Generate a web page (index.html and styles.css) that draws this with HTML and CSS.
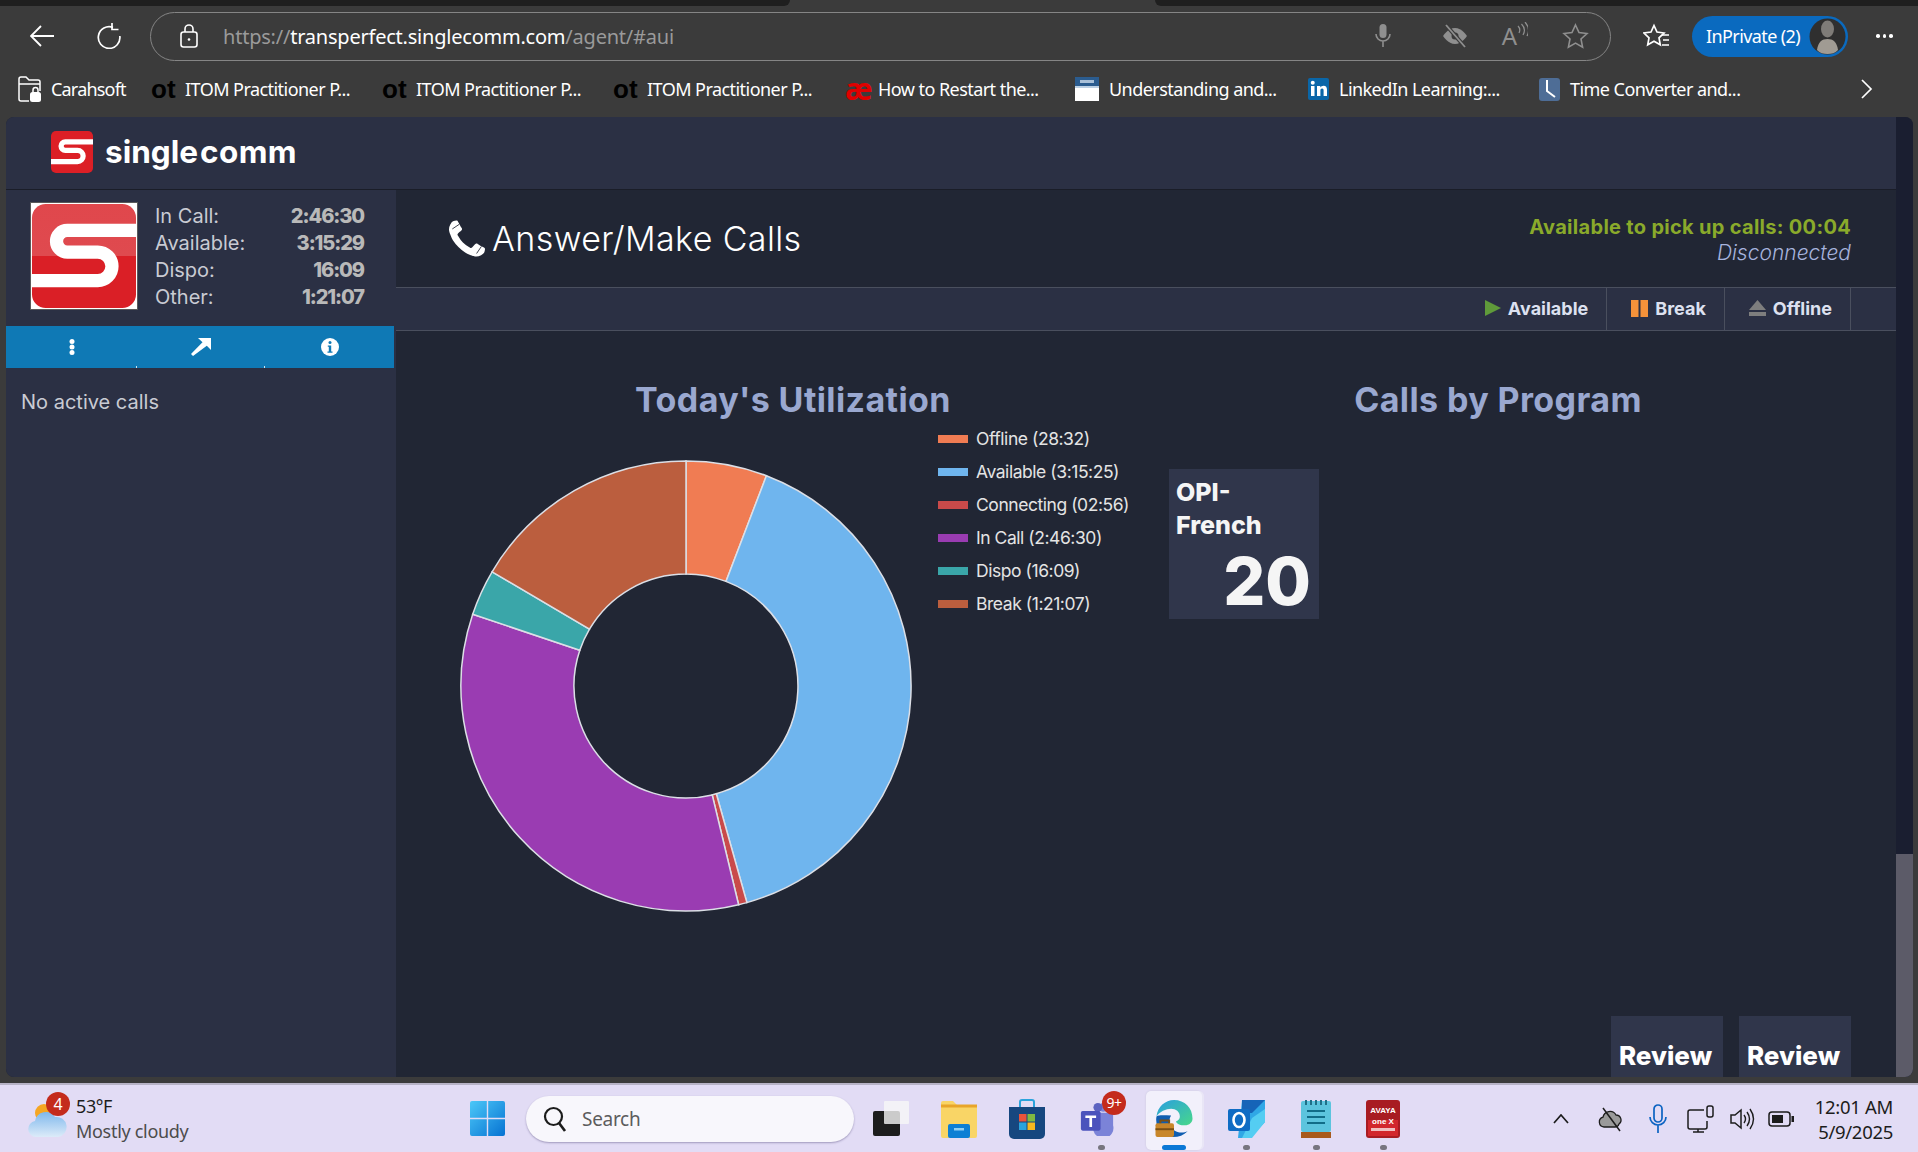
FILE: index.html
```html
<!DOCTYPE html>
<html lang="en">
<head>
    <meta charset="UTF-8">
    <title>SingleComm Agent</title>
    <link rel="stylesheet" href="styles.css">
</head>
<body>
    <div class="tabstrip"><div class="tab-dark tab-left"></div><div class="tab-dark tab-right"></div></div>

    <div class="toolbar">
        <svg class="tool-back" width="24" height="22" viewBox="0 0 24 22"><path d="M11 1 1 11l10 10M1 11h23" fill="none" stroke="#fff" stroke-width="1.8"/></svg>
        <svg class="tool-reload" width="24" height="26" viewBox="0 0 24 26"><path d="M16 4.500A10.800 10.800 0 1 0 22.800 13" fill="none" stroke="#fff" stroke-width="1.7"/><path d="M15 0v6.500h6.500" fill="none" stroke="#fff" stroke-width="1.7"/></svg>
        <div class="address">
            <svg class="lock" width="18" height="24" viewBox="0 0 18 24"><rect x="1" y="8" width="16" height="15" rx="2.500" fill="none" stroke="#fff" stroke-width="1.600"/><path d="M5 8V5a4 4 0 0 1 8 0v3" fill="none" stroke="#fff" stroke-width="1.600"/><circle cx="9" cy="15.500" r="1.300" fill="#fff"/></svg>
            <span class="url"><span class="url-dim">https://</span>transperfect.singlecomm.com<span class="url-dim">/agent/#aui</span></span>
            <div class="address-icons">
                <svg class="icon-mic" width="16" height="26" viewBox="0 0 16 26"><rect x="4.500" y="1" width="7" height="14" rx="3.500" fill="#8f8f8f"/><path d="M1 11a7 7 0 0 0 14 0M8 18v6" fill="none" stroke="#8f8f8f" stroke-width="1.600"/></svg>
                <svg width="26" height="24" viewBox="0 0 26 24"><path d="M1 12s5-8 12-8 12 8 12 8-5 8-12 8-12-8-12-8z" fill="#8f8f8f"/><circle cx="13" cy="12" r="3.500" fill="#3b3b3b"/><path d="M4 1l19 22" stroke="#3b3b3b" stroke-width="4"/><path d="M4 1l19 22" stroke="#8f8f8f" stroke-width="1.800"/></svg>
                <span class="read-aloud">A<svg width="11" height="16" viewBox="0 0 11 16"><path d="M1 4q3 3 1 7M4.500 2q5 5 1.500 11M8 0q6 7 2 14" fill="none" stroke="#8f8f8f" stroke-width="1.200"/></svg></span>
                <svg width="27" height="27" viewBox="0 0 27 27"><path d="M13.500 2l3.500 7.500 8 1-6 5.500 1.600 8.200-7.100-4.100-7.100 4.100L8 16 2 10.500l8-1z" fill="none" stroke="#8f8f8f" stroke-width="1.600"/></svg>
            </div>
        </div>
        <svg class="tool-fav" width="27" height="27" viewBox="0 0 27 27"><path d="M11 2.500l3 6.500 7 1-5 4.800 1.300 7-6.300-3.500-6.300 3.500 1.300-7-5-4.800 7-1z" fill="#3b3b3b" stroke="#fff" stroke-width="1.700"/><path d="M19 12h7M20 17h6M19 22h7" stroke="#fff" stroke-width="1.700"/></svg>
        <div class="profile">
            <span>InPrivate (2)</span>
            <svg class="avatar" width="37" height="37" viewBox="0 0 37 37"><circle cx="18.500" cy="18.500" r="18" fill="#2f2f2f"/><ellipse cx="18.500" cy="11" rx="6.500" ry="8.500" fill="#7f7c78"/><path d="M8 32c1-8 5-11 10.500-11S28 24 29 32c-3 3-6 4-10.500 4S11 35 8 32z" fill="#a09b93"/></svg>
        </div>
        <div class="tool-more"><i></i><i></i><i></i></div>
    </div>

    <div class="bookmarks">
        <div class="bm bm-folder">
            <svg width="24" height="28" viewBox="0 0 24 28"><path d="M1 24V4a2 2 0 0 1 2-2h5l3 3h9a2 2 0 0 1 2 2v9M1 9h21M1 24a2 2 0 0 0 2 2h8" fill="none" stroke="#fff" stroke-width="1.500"/><rect x="12" y="17" width="11" height="10" rx="2.500" fill="#fff"/><path d="M15 17v-2a2.500 2.500 0 0 1 5 0v2" fill="none" stroke="#fff" stroke-width="1.500"/></svg>
            <span>Carahsoft</span>
        </div>
        <div class="bm"><b class="bm-ot">ot</b><span>ITOM Practitioner P...</span></div>
        <div class="bm"><b class="bm-ot">ot</b><span>ITOM Practitioner P...</span></div>
        <div class="bm"><b class="bm-ot">ot</b><span>ITOM Practitioner P...</span></div>
        <div class="bm"><b class="bm-ae">æ</b><span>How to Restart the...</span></div>
        <div class="bm">
            <svg width="24" height="24" viewBox="0 0 24 24"><rect width="24" height="24" fill="#fff"/><rect width="24" height="11" fill="#2b5c8f"/><rect x="5" y="3" width="14" height="3" fill="#a9c0d8"/><rect y="9" width="24" height="2" fill="#bcd0e4"/></svg>
            <span>Understanding and...</span>
        </div>
        <div class="bm">
            <svg width="21" height="22" viewBox="0 0 21 22"><rect width="21" height="22" rx="2" fill="#0a66a8"/><rect x="3" y="8" width="3.500" height="10" fill="#fff"/><circle cx="4.750" cy="4.800" r="2" fill="#fff"/><path d="M9 18V8h3.300v1.500c.7-1.100 1.900-1.800 3.200-1.800 2.500 0 3.500 1.500 3.500 4.300v6h-3.400v-5.500c0-1.300-.4-2-1.500-2s-1.700.8-1.700 2V18z" fill="#fff"/></svg>
            <span>LinkedIn Learning:...</span>
        </div>
        <div class="bm">
            <svg width="21" height="23" viewBox="0 0 21 23"><rect width="21" height="23" rx="3" fill="#4e6d96"/><path d="M8 2v11l8 6" fill="none" stroke="#fff" stroke-width="2"/></svg>
            <span>Time Converter and...</span>
        </div>
        <svg class="bm-next" width="13" height="20" viewBox="0 0 13 20"><path d="M2 1l9 9-9 9" fill="none" stroke="#fff" stroke-width="1.700"/></svg>
    </div>

    <div class="app">
        <div class="app-body">
            <header class="brandbar">
                <svg class="brand-logo" width="42" height="42" viewBox="0 0 100 100"><rect width="100" height="100" rx="12" fill="#dc1f26"/><path d="M100 26H34a10 10 0 0 0 0 20h29a13.500 13.500 0 0 1 0 27H0" fill="none" stroke="#fff" stroke-width="12.500"/></svg>
                <span class="brand-name">single<span class="brand-name-end">comm</span></span>
            </header>
            <div class="workspace">
                <aside class="sidebar">
                    <div class="agent">
                        <svg class="agent-logo" width="106" height="106" viewBox="0 0 108 108">
                            <defs><linearGradient id="glossRed" x1="0" y1="0" x2="0" y2="1"><stop offset="0" stop-color="#e0474c"/><stop offset=".5" stop-color="#df4a4f"/><stop offset=".5" stop-color="#da1f26"/><stop offset="1" stop-color="#da1f26"/></linearGradient></defs>
                            <rect width="108" height="108" fill="#fff"/>
                            <rect x="1" y="1" width="106" height="106" rx="14" fill="url(#glossRed)"/>
                            <path d="M108 28H37a11 11 0 0 0 0 22h31a14.500 14.500 0 0 1 0 29H0" fill="none" stroke="#fff" stroke-width="13.500"/>
                        </svg>
                        <dl class="stats">
                            <dt>In Call:</dt><dd>2:46:30</dd>
                            <dt>Available:</dt><dd>3:15:29</dd>
                            <dt>Dispo:</dt><dd>16:09</dd>
                            <dt>Other:</dt><dd>1:21:07</dd>
                        </dl>
                    </div>
                    <nav class="agent-tabs">
                        <div class="agent-tab">
                            <svg width="6" height="16" viewBox="0 0 6 16"><circle cx="3" cy="2.500" r="2.500" fill="#fff"/><circle cx="3" cy="8" r="2.500" fill="#fff"/><circle cx="3" cy="13.500" r="2.500" fill="#fff"/></svg>
                        </div>
                        <div class="agent-tab">
                            <svg width="20" height="18" viewBox="0 0 20 18"><path d="M7 0h13v12l-4.200-4.300L2 18l-2-2L11.500 4.300z" fill="#fff"/></svg>
                        </div>
                        <div class="agent-tab">
                            <svg width="18" height="18" viewBox="0 0 18 18"><circle cx="9" cy="9" r="9" fill="#fff"/><circle cx="9" cy="4.500" r="1.500" fill="#0f79b5"/><path d="M6.800 7.500h3.400v6h1.300v1.300h-5v-1.300h1.300V8.800H6.800z" fill="#0f79b5"/></svg>
                        </div>
                    </nav>
                    <p class="no-calls">No active calls</p>
                </aside>

                <main class="main">
                    <div class="page-head">
                        <h1 class="page-title">
                            <svg width="36" height="37" viewBox="0 0 1408 1408"><path d="M1408 1112q0 27-10 70.500t-21 68.500q-21 50-122 106-94 51-186 51-27 0-53-3.500t-57.500-12.500-47-14.500-55.500-20.500-49-18q-98-35-175-83-127-79-264-216t-216-264q-48-77-83-175-3-9-18-49t-20.500-55.500-14.500-47-12.500-57.500-3.500-53q0-92 51-186 56-101 106-122 25-11 68.500-21t70.500-10q14 0 21 3 18 6 53 76 11 19 30 54t35 63.500 31 53.500q3 4 17.500 25t21.500 35.500 7 28.500q0 20-28.500 50t-62 55-62 53-28.500 46q0 9 5 22.500t8.500 20.500 14 24 11.500 19q76 137 174 235t235 174q2 1 19 11.500t24 14 20.500 8.500 22.500 5q18 0 46-28.500t53-62 55-62 50-28.500q14 0 28.500 7t35.500 21.500 25 17.500q25 15 53.500 31t63.500 35 54 30q70 35 76 53 3 7 3 21z" fill="#fff"/><path d="M130 330L400 150M1080 1290L1270 1010" stroke="#212634" stroke-width="34"/></svg>
                            Answer/Make Calls
                        </h1>
                        <div class="status">
                            <div class="status-main">Available to pick up calls: 00:04</div>
                            <div class="status-sub">Disconnected</div>
                        </div>
                    </div>
                    <div class="actions">
                        <div class="action">
                            <svg width="16" height="16" viewBox="0 0 16 16"><path d="M0 0l16 8-16 8z" fill="#5f9a3a"/></svg>
                            Available
                        </div>
                        <div class="action">
                            <svg width="17" height="17" viewBox="0 0 17 17"><rect width="7.500" height="17" fill="#f5923a"/><rect x="9.500" width="7.500" height="17" fill="#f5923a"/></svg>
                            Break
                        </div>
                        <div class="action">
                            <svg width="17" height="16" viewBox="0 0 17 16"><path d="M8.500 0L17 10H0z" fill="#7e7e7e"/><rect y="12" width="17" height="4" fill="#7e7e7e"/></svg>
                            Offline
                        </div>
                    </div>
                    <div class="content">
                        <div class="charts">
                            <section class="util">
                                <h2 class="chart-title">Today's Utilization</h2>
                                <div class="util-row">
                                    <svg class="donut" width="454" height="454" viewBox="-227 -227 454 454">
                                        <g stroke="#dcdfe6" stroke-width="1.500">
                                            <path d="M0-225A225 225 0 0 1 80.400-210.200L40-104.600A112 112 0 0 0 0-112z" fill="#f07c53"/>
                                            <path d="M80.400-210.200A225 225 0 0 1 60.900 216.600L30.300 107.800A112 112 0 0 0 40-104.600z" fill="#6fb5ee"/>
                                            <path d="M60.900 216.600A225 225 0 0 1 52.600 218.700L26.200 108.900A112 112 0 0 0 30.300 107.800z" fill="#c94a4a"/>
                                            <path d="M52.600 218.700A225 225 0 0 1-213.300-71.800L-106.200-35.700A112 112 0 0 0 26.200 108.900z" fill="#9a3cb2"/>
                                            <path d="M-213.300-71.800A225 225 0 0 1-193.900-114.200L-96.500-56.800A112 112 0 0 0-106.200-35.700z" fill="#3aa6a9"/>
                                            <path d="M-193.900-114.200A225 225 0 0 1 0-225V-112A112 112 0 0 0-96.500-56.800z" fill="#bb5e3e"/>
                                        </g>
                                    </svg>
                                    <ul class="legend">
                                        <li><i class="swatch swatch-offline"></i>Offline (28:32)</li>
                                        <li><i class="swatch swatch-available"></i>Available (3:15:25)</li>
                                        <li><i class="swatch swatch-connecting"></i>Connecting (02:56)</li>
                                        <li><i class="swatch swatch-incall"></i>In Call (2:46:30)</li>
                                        <li><i class="swatch swatch-dispo"></i>Dispo (16:09)</li>
                                        <li><i class="swatch swatch-break"></i>Break (1:21:07)</li>
                                    </ul>
                                </div>
                            </section>
                            <section class="programs">
                                <h2 class="chart-title">Calls by Program</h2>
                                <div class="program-card">
                                    <div class="program-name">OPI-<br>French</div>
                                    <div class="program-count">20</div>
                                </div>
                            </section>
                        </div>
                        <div class="reviews">
                            <div class="review-card">Review</div>
                            <div class="review-card">Review</div>
                        </div>
                    </div>
                </main>
            </div>
        </div>
        <div class="scrollbar"><div class="scroll-thumb"></div></div>
    </div>

    <div class="taskbar">
        <div class="weather">
            <svg class="weather-icon" width="40" height="40" viewBox="0 0 40 40">
                <circle cx="16" cy="14" r="9" fill="#f5a623"/>
                <defs><linearGradient id="cloudFill" x1="0" y1="0" x2="0" y2="1"><stop offset="0" stop-color="#7fb8ec"/><stop offset="1" stop-color="#dcebf9"/></linearGradient></defs>
                <path d="M8 38a8 8 0 0 1-1-15.900A11 11 0 0 1 27 18a9.500 9.500 0 0 1 3 20z" fill="url(#cloudFill)"/>
            </svg>
            <span class="weather-badge">4</span>
            <div class="weather-text">
                <div class="weather-temp">53°F</div>
                <div class="weather-desc">Mostly cloudy</div>
            </div>
        </div>
        <svg class="win-logo" width="35" height="35" viewBox="0 0 35 35">
            <defs><linearGradient id="winBlue" x1="0" y1="0" x2="1" y2="1"><stop offset="0" stop-color="#4cc8f8"/><stop offset="1" stop-color="#0672d2"/></linearGradient></defs>
            <path d="M2 0h14.800v16.800H0V2a2 2 0 0 1 2-2zM18.200 0H33a2 2 0 0 1 2 2v14.800H18.200zM0 18.200h16.800V35H2a2 2 0 0 1-2-2zM18.200 18.200H35V33a2 2 0 0 1-2 2H18.200z" fill="url(#winBlue)"/>
        </svg>
        <div class="search">
            <svg width="24" height="26" viewBox="0 0 24 26"><circle cx="10.500" cy="10.500" r="8.500" fill="none" stroke="#1c1c1c" stroke-width="2.200"/><path d="M16 17l6 8" stroke="#1c1c1c" stroke-width="2.600"/></svg>
            <span>Search</span>
        </div>
        <div class="task-apps">
            <div class="task-app">
                <svg width="37" height="35" viewBox="0 0 37 35"><rect x="0" y="10" width="27" height="25" rx="2" fill="#1d1d1d"/><rect x="11" y="0" width="25" height="23" rx="1" fill="#f7f7f7" fill-opacity=".8"/></svg>
            </div>
            <div class="task-app">
                <svg width="36" height="38" viewBox="0 0 36 38"><path d="M0 3a2 2 0 0 1 2-2h10l4 4h18a2 2 0 0 1 2 2v29a2 2 0 0 1-2 2H2a2 2 0 0 1-2-2z" fill="#f9d566"/><path d="M0 6h36" stroke="#e8a52a" stroke-width="3"/><rect x="7" y="24" width="22" height="14" rx="2" fill="#0d7fd4"/><rect x="13" y="28" width="10" height="2.500" fill="#8fd0f5"/></svg>
            </div>
            <div class="task-app task-app-store">
                <svg width="36" height="40" viewBox="0 0 36 40"><path d="M11 8V3a2 2 0 0 1 2-2h10a2 2 0 0 1 2 2v5" fill="none" stroke="#2aa3dc" stroke-width="2"/><path d="M0 8h36v27a5 5 0 0 1-5 5H5a5 5 0 0 1-5-5z" fill="#16477f"/><rect x="10" y="15" width="7.500" height="7.500" fill="#e8533b"/><rect x="18.500" y="15" width="7.500" height="7.500" fill="#7fba42"/><rect x="10" y="23.500" width="7.500" height="7.500" fill="#2aa3dc"/><rect x="18.500" y="23.500" width="7.500" height="7.500" fill="#f7b81e"/></svg>
            </div>
            <div class="task-app task-app-teams">
                <svg width="36" height="34" viewBox="0 0 36 38"><circle cx="25" cy="6" r="5" fill="#7b83d8"/><path d="M12 12h22a2 2 0 0 1 2 2v12a11 11 0 0 1-22 6z" fill="#7b83d8"/><circle cx="19" cy="6" r="5" fill="#5c63c0"/><rect y="10" width="22" height="22" rx="2" fill="#4b53bc"/><path d="M5 15h12v3h-4.500v10h-3V18H5z" fill="#fff"/></svg>
                <span class="teams-badge">9+</span>
            </div>
            <div class="task-app task-app-active">
                <svg width="38" height="37" viewBox="0 0 38 38">
                    <defs>
                        <linearGradient id="edgeTop" x1="0" y1="0" x2="1" y2="1"><stop offset="0" stop-color="#2a9ee0"/><stop offset="1" stop-color="#48d88a"/></linearGradient>
                    </defs>
                    <path d="M1 17C2 7 10 0 19 0c11 0 19 8 19 19 0 4-3 7-8 7-4 0-8-1-9-4 3-1 4-3 4-5 0-5-4-8-9-8S4 12 1 17z" fill="url(#edgeTop)"/>
                    <path d="M1 17c-2 11 6 21 17 21 6 0 11-2 15-6-4 2-10 2-14-1-5-4-6-10-3-15-6 0-12-1-15 1z" fill="#0f5db0"/>
                    <rect x="0" y="24" width="19" height="14" rx="2" fill="#c8862a"/>
                    <path d="M5 24v-3h9v3" fill="none" stroke="#7a4f14" stroke-width="2"/>
                    <rect x="0" y="29" width="19" height="2" fill="#7a4f14"/>
                </svg>
            </div>
            <div class="task-app">
                <svg width="37" height="38" viewBox="0 0 37 38"><path d="M14 0h23v22L22 38H10z" fill="#30a7e6"/><path d="M14 0h23L24 13H14z" fill="#1664b8"/><path d="M37 9v13L24 38H14l10-20z" fill="#54cdf2"/><rect y="9" width="22" height="22" rx="2" fill="#0f6cc4"/><ellipse cx="11" cy="20" rx="5.500" ry="7" fill="none" stroke="#fff" stroke-width="2.600"/></svg>
            </div>
            <div class="task-app">
                <svg width="30" height="38" viewBox="0 0 30 38"><rect y="1" width="30" height="31" rx="2" fill="#5cc4de"/><path d="M5 0v5M10 0v5M15 0v5M20 0v5M25 0v5" stroke="#1f6f88" stroke-width="2"/><path d="M6 11h18M6 17h18M6 23h18" stroke="#116c88" stroke-width="2.200"/><rect y="32" width="30" height="6" fill="#a85a1c"/></svg>
            </div>
            <div class="task-app">
                <svg width="34" height="38" viewBox="0 0 34 38"><rect width="34" height="38" rx="3" fill="#a81c22"/><rect x="2" y="20" width="30" height="16" fill="#d2272c"/><text x="17" y="13" class="avaya-text">AVAYA</text><text x="17" y="24" class="avaya-text">one X</text><rect x="5" y="28" width="24" height="3" fill="#f0c0c0"/></svg>
            </div>
        </div>
        <div class="tray">
            <div class="tray-cell"><svg width="16" height="10" viewBox="0 0 16 10"><path d="M1 9l7-8 7 8" fill="none" stroke="#1c1c1c" stroke-width="1.700"/></svg></div>
            <div class="tray-cell"><svg width="26" height="26" viewBox="0 0 26 26"><path d="M6 21a5 5 0 0 1-1-9.800A7 7 0 0 1 18 9a5 5 0 0 1 3 9c-.6 2-2 3-4 3z" fill="#9a9a9a" stroke="#1c1c1c" stroke-width="1.300"/><path d="M5 2l17 23" stroke="#1c1c1c" stroke-width="1.500"/></svg></div>
            <div class="tray-cell"><svg width="18" height="30" viewBox="0 0 18 30"><rect x="5" y="1" width="8" height="17" rx="4" fill="none" stroke="#0b63c2" stroke-width="1.700"/><path d="M1 13a8 8 0 0 0 16 0M9 21v8" fill="none" stroke="#0b63c2" stroke-width="1.700"/></svg></div>
            <div class="tray-cell"><svg width="28" height="28" viewBox="0 0 28 28"><path d="M17 5H3a2 2 0 0 0-2 2v15a2 2 0 0 0 2 2h15a2 2 0 0 0 2-2v-6M11 24v3M6 27h11" fill="none" stroke="#1c1c1c" stroke-width="1.500"/><rect x="20" y="1" width="6" height="11" rx="2" fill="none" stroke="#1c1c1c" stroke-width="1.500"/></svg></div>
            <div class="tray-cell"><svg width="26" height="24" viewBox="0 0 26 24"><path d="M2 8h4l6-5v18l-6-5H2z" fill="none" stroke="#1c1c1c" stroke-width="1.500"/><path d="M15 8q3 4 0 8M18 5q5 7 0 14M21 2q7 10 0 20" fill="none" stroke="#1c1c1c" stroke-width="1.400"/></svg></div>
            <div class="tray-cell"><svg width="26" height="16" viewBox="0 0 26 16"><rect x="1" y="1" width="21" height="14" rx="3" fill="none" stroke="#1c1c1c" stroke-width="1.500"/><rect x="4" y="4" width="11" height="8" fill="#1c1c1c"/><rect x="23.500" y="5" width="2.500" height="6" fill="#1c1c1c"/></svg></div>
            <div class="clock"><div>12:01 AM</div><div>5/9/2025</div></div>
        </div>
    </div>
</body>
</html>
```

FILE: styles.css
```css
* {
  box-sizing: border-box;
}

body {
  margin: 0;
  width: 1918px;
  height: 1152px;
  overflow: hidden;
  display: flex;
  flex-direction: column;
  background-color: #3b3b3b;
  font-family: "Inter", "Liberation Sans", sans-serif;
}

/* browser chrome */
.tabstrip {
  height: 6px;
  display: flex;
  justify-content: space-between;
}

.tab-dark {
  background-color: #1f1f1f;
}

.tab-left {
  width: 790px;
  border-bottom-right-radius: 6px;
}

.tab-right {
  width: 763px;
  border-bottom-left-radius: 6px;
}

.toolbar {
  height: 60px;
  display: flex;
  align-items: center;
  padding-left: 30px;
  font-family: "Noto Sans", sans-serif;
}

.tool-reload {
  margin-left: 43px;
}

.address {
  width: 1461px;
  height: 49px;
  margin-left: 29px;
  display: flex;
  align-items: center;
  padding-left: 29px;
  border: 1.5px solid #858585;
  border-radius: 25px;
}

.url {
  margin-left: 25px;
  font-size: 20px;
  letter-spacing: -0.22px;
  color: #fff;
}

.url-dim {
  color: #9a9a9a;
}

.address-icons {
  margin-left: auto;
  margin-right: 21px;
  display: flex;
  align-items: center;
  gap: 34px;
}

.icon-mic {
  margin-right: 17px;
}

.read-aloud {
  display: flex;
  color: #8f8f8f;
  font-size: 24px;
  line-height: 28px;
}

.tool-fav {
  margin-left: 32px;
}

.profile {
  width: 156px;
  height: 41px;
  margin-left: 22px;
  padding-left: 14px;
  display: flex;
  align-items: center;
  justify-content: space-between;
  background-color: #0a6abf;
  border-radius: 21px;
  color: #fff;
  font-size: 18px;
  letter-spacing: -0.6px;
}

.avatar {
  margin-right: 2px;
}

.tool-more {
  margin-left: 28px;
  display: flex;
  gap: 3px;
}

.tool-more i {
  width: 3.500px;
  height: 3.500px;
  border-radius: 50%;
  background-color: #fff;
}

.bookmarks {
  height: 51px;
  padding: 0 0 5px 18px;
  display: grid;
  grid-template-columns: 133px 231px 231px 232px 230px 233px 231px 321px 13px;
  align-items: center;
  font-family: "Noto Sans", sans-serif;
  font-size: 18px;
  letter-spacing: -0.55px;
  color: #fff;
}

.bm {
  display: flex;
  align-items: center;
  gap: 10px;
  white-space: nowrap;
}

.bm-folder {
  gap: 9px;
  letter-spacing: -0.8px;
}

.bm-ot {
  width: 24px;
  color: #000;
  font-size: 26px;
  line-height: 26px;
  letter-spacing: 0;
  font-family: "Liberation Sans", sans-serif;
}

.bm-ae {
  width: 23px;
  color: #e00000;
  font-size: 30px;
  line-height: 26px;
  letter-spacing: 0;
}

/* app */
.app {
  width: 1907px;
  height: 960px;
  margin-left: 6px;
  display: flex;
  overflow: hidden;
  border-radius: 8px;
  background-color: #212634;
}

.app-body {
  width: 1890px;
  display: flex;
  flex-direction: column;
}

.brandbar {
  height: 73px;
  flex-shrink: 0;
  padding-left: 45px;
  display: flex;
  align-items: center;
  gap: 12px;
  background-color: #2b3044;
  border-bottom: 1px solid #1a1d28;
}

.brand-logo {
  margin-top: -2px;
}

.brand-name {
  color: #fff;
  font-size: 31.500px;
  font-weight: 700;
  margin-top: -4px;
}

.brand-name-end {
  margin-left: 2px;
  letter-spacing: 0.4px;
}

.workspace {
  flex: 1;
  display: flex;
  min-height: 0;
}

.sidebar {
  width: 390px;
  background-color: #2b3044;
  color: #c9cbd3;
}

.agent {
  height: 136px;
  padding: 13px 32px 0 25px;
  display: flex;
}

.agent-logo {
  outline: 1px solid #5a5a5a;
  flex-shrink: 0;
}

.stats {
  flex: 1;
  margin: 0 0 0 18px;
  display: grid;
  grid-template-columns: 1fr auto;
  grid-auto-rows: 27px;
  font-size: 20px;
  line-height: 27px;
}

.stats dd {
  margin: 0;
  text-align: right;
  font-weight: 800;
  letter-spacing: -1.1px;
  color: #b9b9b9;
}

.agent-tabs {
  width: 388px;
  height: 42px;
  display: grid;
  grid-template-columns: 131px 128px 129px;
  background-color: #0f79b5;
}

.agent-tab {
  position: relative;
  display: flex;
  align-items: center;
  justify-content: center;
}

.agent-tab:not(:last-child)::after {
  content: "";
  position: absolute;
  right: 0;
  bottom: 0;
  width: 1px;
  height: 2px;
  background-color: #cfe4f1;
}

.no-calls {
  margin: 20px 0 0 15px;
  font-size: 20px;
  line-height: 28px;
}

.main {
  flex: 1;
  min-width: 0;
  display: flex;
  flex-direction: column;
}

.page-head {
  height: 98px;
  flex-shrink: 0;
  padding: 0 45px 0 53px;
  display: flex;
  align-items: center;
  justify-content: space-between;
  border-bottom: 1px solid #4a4f5e;
}

.page-title {
  margin: 0;
  display: flex;
  align-items: center;
  gap: 7px;
  color: #fff;
  font-size: 34px;
  font-weight: 300;
  letter-spacing: 0.4px;
}

.status {
  padding-top: 2px;
  text-align: right;
  font-size: 20px;
  line-height: 25px;
}

.status-main {
  color: #8aaa2b;
  font-weight: 700;
  letter-spacing: 0.3px;
}

.status-sub {
  color: #a6b3dd;
  font-style: italic;
  font-weight: 300;
  font-size: 21px;
}

.actions {
  height: 43px;
  flex-shrink: 0;
  padding-right: 45px;
  display: flex;
  justify-content: flex-end;
  background-color: #2b3044;
  border-bottom: 1px solid #4a4f5e;
}

.action {
  display: flex;
  align-items: center;
  gap: 7px;
  padding: 0 18px 2px 24px;
  color: #dde1f0;
  font-size: 18px;
  font-weight: 700;
  border-right: 1px solid #4a4f5e;
}

.content {
  flex: 1;
  min-height: 0;
  display: flex;
  flex-direction: column;
}

.charts {
  display: flex;
}

.chart-title {
  margin: 49px 0 0;
  text-align: center;
  color: #9aa8d0;
  font-size: 34px;
  font-weight: 700;
  letter-spacing: 0.4px;
  line-height: 40px;
}

.util {
  width: 773px;
  padding-left: 21px;
}

.util-row {
  display: flex;
  margin-left: 42px;
}

.donut {
  margin-top: 39px;
  flex-shrink: 0;
}

.legend {
  list-style: none;
  margin: 2px 0 0 25px;
  padding: 0;
  color: #e4e4e4;
  font-size: 17.500px;
  letter-spacing: -0.45px;
  white-space: nowrap;
}

.legend li {
  height: 33px;
  display: flex;
  align-items: center;
  gap: 8px;
}

.swatch {
  width: 30px;
  height: 8px;
}

.swatch-offline { background-color: #f07c53; }
.swatch-available { background-color: #6fb5ee; }
.swatch-connecting { background-color: #c94a4a; }
.swatch-incall { background-color: #9a3cb2; }
.swatch-dispo { background-color: #3aa6a9; }
.swatch-break { background-color: #bb5e3e; }

.programs {
  flex: 1;
  padding-right: 69px;
}

.program-card {
  width: 150px;
  height: 150px;
  margin-top: 49px;
  padding: 7px 8px 0 7px;
  background-color: #30364b;
  color: #f5f5f5;
  font-weight: 800;
}

.program-name {
  font-size: 25px;
  line-height: 33px;
}

.program-count {
  text-align: right;
  font-size: 66px;
  line-height: 78px;
}

.reviews {
  margin-top: auto;
  padding-right: 45px;
  display: flex;
  justify-content: flex-end;
  gap: 16px;
}

.review-card {
  width: 112px;
  height: 61px;
  padding: 24px 3px 0 0;
  text-align: center;
  background-color: #30364b;
  color: #fff;
  font-size: 26px;
  font-weight: 800;
  line-height: 32px;
}

.scrollbar {
  flex: 1;
  display: flex;
  flex-direction: column;
  justify-content: flex-end;
  background-color: #1a1e30;
}

.scroll-thumb {
  height: 223px;
  background-color: #5c5b68;
}

/* taskbar */
.taskbar {
  height: 69px;
  margin-top: 6px;
  padding-left: 28px;
  display: flex;
  align-items: center;
  background-color: #e2dcf5;
  border-top: 2px solid #b7b3c6;
  font-family: "Noto Sans", sans-serif;
  color: #1c1c1c;
}

.weather {
  position: relative;
  width: 442px;
  display: flex;
  align-items: center;
  gap: 8px;
}

.weather-badge {
  position: absolute;
  left: 18px;
  top: -2px;
  width: 24px;
  height: 24px;
  border-radius: 50%;
  background-color: #c42b1c;
  color: #fff;
  font-size: 16px;
  line-height: 24px;
  text-align: center;
}

.weather-temp {
  font-size: 18px;
  line-height: 25px;
  letter-spacing: -0.4px;
}

.weather-desc {
  font-size: 18px;
  line-height: 24px;
  letter-spacing: -0.3px;
  color: #4c4c4c;
}

.search {
  width: 328px;
  height: 46px;
  margin-left: 21px;
  padding-left: 17px;
  display: flex;
  align-items: center;
  gap: 15px;
  background-color: #f8f7fc;
  border-radius: 23px;
  box-shadow: 0 1px 2px rgba(80, 70, 120, 0.45);
  color: #5c5c5c;
  font-size: 19px;
  letter-spacing: -0.3px;
}

.task-apps {
  margin-left: 3px;
  display: grid;
  grid-template-columns: 68px 68px 72px 73px 72px 72px 68px 66px;
}

.task-app {
  position: relative;
  height: 66px;
  display: flex;
  align-items: center;
  justify-content: center;
}

.task-app:not(:first-child):not(:nth-child(2)):not(:nth-child(3))::after {
  content: "";
  position: absolute;
  left: 50%;
  bottom: 2px;
  width: 7px;
  height: 5px;
  margin-left: -3.500px;
  border-radius: 3px;
  background-color: #77757f;
}

.task-app-active::before {
  content: "";
  position: absolute;
  left: 8px;
  right: 8px;
  top: 5px;
  bottom: 2px;
  border-radius: 5px;
  background-color: #f2f0fb;
  box-shadow: 2px 0 0 #e9e6f6, 0 0 2px #c8c4d8;
}

.task-app-active svg {
  position: relative;
}

.task-app-active::after {
  width: 24px !important;
  margin-left: -12px !important;
  background-color: #0b78d6 !important;
}

.task-app-store svg {
  margin-right: 5px;
}

.task-app-teams svg {
  margin-right: 10px;
}

.teams-badge {
  position: absolute;
  left: 37px;
  top: 5px;
  width: 24px;
  height: 24px;
  border-radius: 50%;
  background-color: #c42b1c;
  color: #fff;
  font-size: 14px;
  line-height: 24px;
  text-align: center;
  letter-spacing: -0.5px;
}

.avaya-text {
  fill: #fff;
  font-family: "Liberation Sans", sans-serif;
  font-size: 8px;
  font-weight: 700;
  text-anchor: middle;
}

.tray {
  margin-left: 120px;
  display: grid;
  grid-template-columns: 50px 49px 45px 42px 40px 37px 94px;
  align-items: center;
}

.tray-cell {
  display: flex;
  justify-content: center;
}

.clock {
  text-align: right;
  font-size: 18.500px;
  line-height: 25px;
  letter-spacing: -0.3px;
}
```
